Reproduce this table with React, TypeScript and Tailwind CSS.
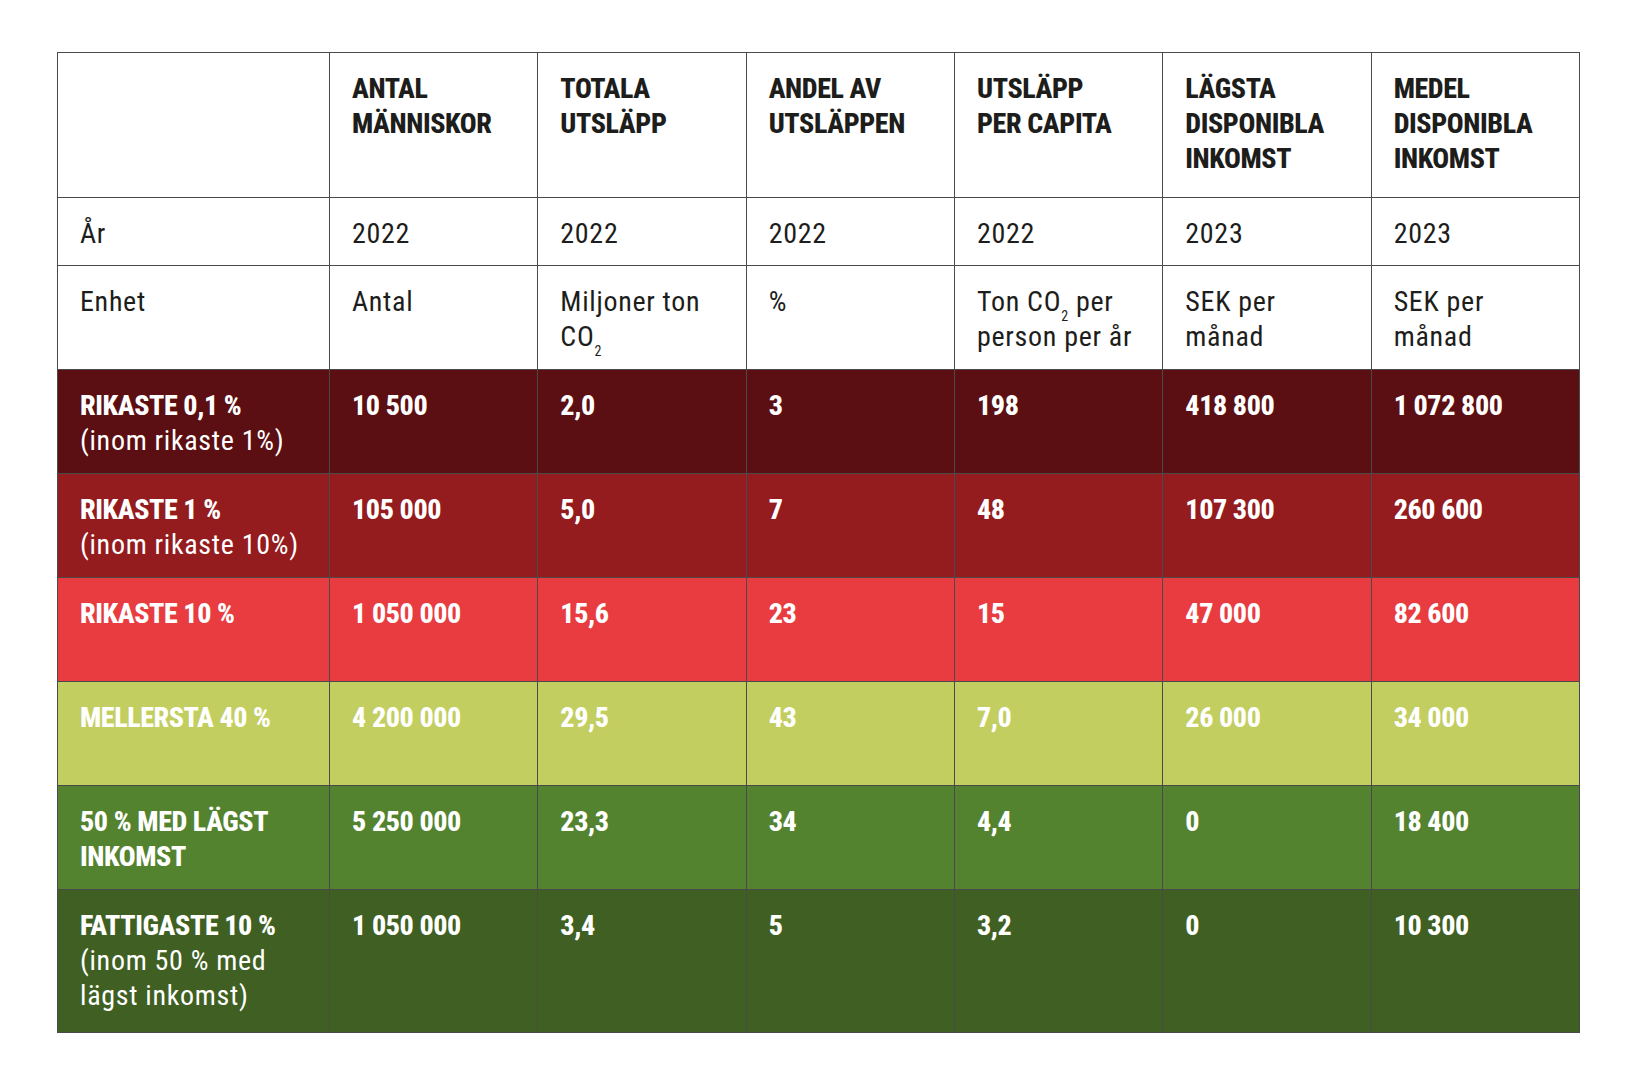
type Row = {
  label: React.ReactNode
  sub?: React.ReactNode
  values: string[]
  bg: string
  h: string
}

const rows: Row[] = [
  { label: 'RIKASTE 0,1 %', sub: '(inom rikaste 1%)', values: ['10 500', '2,0', '3', '198', '418 800', '1 072 800'], bg: 'bg-[#5b0f12]', h: 'h-[104px]' },
  { label: 'RIKASTE 1 %', sub: '(inom rikaste 10%)', values: ['105 000', '5,0', '7', '48', '107 300', '260 600'], bg: 'bg-[#941b1e]', h: 'h-[104px]' },
  { label: 'RIKASTE 10 %', values: ['1 050 000', '15,6', '23', '15', '47 000', '82 600'], bg: 'bg-[#e83c41]', h: 'h-[104px]' },
  { label: 'MELLERSTA 40 %', values: ['4 200 000', '29,5', '43', '7,0', '26 000', '34 000'], bg: 'bg-[#c2ce5f]', h: 'h-[104px]' },
  { label: <>50 % MED LÄGST<br />INKOMST</>, values: ['5 250 000', '23,3', '34', '4,4', '0', '18 400'], bg: 'bg-[#548330]', h: 'h-[104px]' },
  {
    label: 'FATTIGASTE 10 %',
    sub: <>(inom 50 % med<br />lägst inkomst)</>,
    values: ['1 050 000', '3,4', '5', '3,2', '0', '10 300'],
    bg: 'bg-[#3f6022]',
    h: 'h-[143px]',
  },
]

const headers = [
  <>ANTAL<br />MÄNNISKOR</>,
  <>TOTALA<br />UTSLÄPP</>,
  <>ANDEL AV<br />UTSLÄPPEN</>,
  <>UTSLÄPP<br />PER CAPITA</>,
  <>LÄGSTA<br />DISPONIBLA<br />INKOMST</>,
  <>MEDEL<br />DISPONIBLA<br />INKOMST</>,
]

const years = ['2022', '2022', '2022', '2022', '2023', '2023']

function Co2() {
  return (
    <>
      CO<sub className="text-[14px] -bottom-[10px]">2</sub>
    </>
  )
}

const units = [
  <>Antal</>,
  <>Miljoner ton<br /><Co2 /></>,
  <>%</>,
  <>Ton <Co2 />&nbsp;per<br />person per år</>,
  <>SEK per<br />månad</>,
  <>SEK per<br />månad</>,
]

const cell = 'border border-[#4a4a4a] align-top px-[22px] pt-[18px] text-left whitespace-nowrap'
const bold = 'font-extrabold [font-stretch:75%] tracking-[-0.4px]'
const regular = 'font-normal [font-stretch:75%] tracking-[0.7px]'

export default function App() {
  return (
    <div className="min-h-screen bg-white pt-[52px] pl-[57px] font-['Roboto',sans-serif] text-[28px] leading-[35px]">
      <table className="w-[1523px] table-fixed border-collapse">
        <colgroup>
          <col className="w-[272px]" />
          <col />
          <col />
          <col />
          <col />
          <col />
          <col />
        </colgroup>
        <thead>
          <tr className="h-[145px] text-[#1d1d1b]">
            <th className={cell} />
            {headers.map((h, i) => (
              <th key={i} className={`${cell} ${bold}`}>
                {h}
              </th>
            ))}
          </tr>
        </thead>
        <tbody>
          <tr className={`h-[68px] text-[#1d1d1b] ${regular}`}>
            <td className={cell}>År</td>
            {years.map((y, i) => (
              <td key={i} className={cell}>{y}</td>
            ))}
          </tr>
          <tr className={`h-[104px] text-[#1d1d1b] ${regular}`}>
            <td className={cell}>Enhet</td>
            {units.map((u, i) => (
              <td key={i} className={cell}>{u}</td>
            ))}
          </tr>
          {rows.map((r, idx) => (
            <tr key={idx} className={`${r.h} ${r.bg} text-white`}>
              <td className={`${cell} border-[#2e2e2e]`}>
                <div className={bold}>{r.label}</div>
                {r.sub && <div className={regular}>{r.sub}</div>}
              </td>
              {r.values.map((v, i) => (
                <td key={i} className={`${cell} border-[#2e2e2e] ${bold}`}>
                  {v}
                </td>
              ))}
            </tr>
          ))}
        </tbody>
      </table>
    </div>
  )
}
